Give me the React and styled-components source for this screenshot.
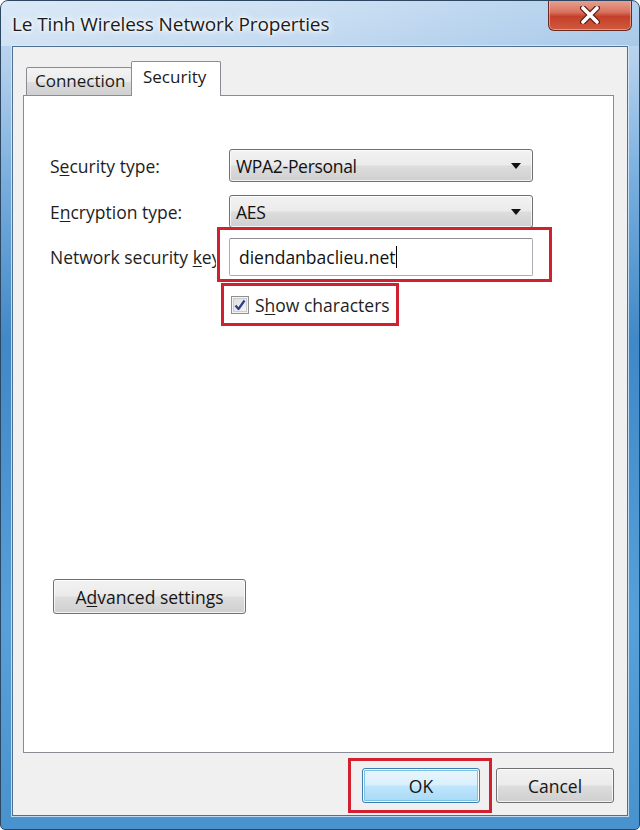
import styled, { createGlobalStyle, css } from "styled-components";

const Global = createGlobalStyle`
  html, body { margin: 0; padding: 0; background: #fff; }
  body { font-family: "Open Sans", "Noto Sans", sans-serif; }
  * { box-sizing: border-box; }
`;

const win7Face = css`
  border: 1px solid #707070;
  border-radius: 3px;
  background: linear-gradient(to bottom, #f2f2f2 0%, #ebebeb 48%, #dddddd 52%, #cfcfcf 100%);
  box-shadow: inset 0 0 0 1px rgba(255, 255, 255, 0.75);
`;

const Window = styled.div`
  width: 640px;
  height: 830px;
  border: 1px solid #2d4763;
  border-radius: 8px 8px 5px 5px;
  overflow: hidden;
  display: flex;
  flex-direction: column;
  background:
    linear-gradient(to bottom, #c7ddf2 0px, #b4d0ec 60px, #78aede 180px, #4088c6 340px, #58a0d9 620px, #4892cd 830px);
`;

const TitleBar = styled.div`
  height: 45px;
  flex-shrink: 0;
  display: flex;
  align-items: flex-start;
  padding-left: 11px;
  background: linear-gradient(to right, rgba(255, 255, 255, 0.35) 0%, rgba(255, 255, 255, 0.15) 45%, rgba(120, 170, 220, 0.25) 100%);
`;

const Title = styled.div`
  margin-top: 10px;
  font-size: 19px;
  color: #1b1b1b;
  letter-spacing: -0.1px;
  text-shadow: 0 0 10px #fff, 0 0 6px #fff, 0 0 3px #fff;
`;

const CloseButton = styled.div`
  margin-left: auto;
  margin-right: 7px;
  margin-top: -1px;
  width: 84px;
  height: 31px;
  border: 1px solid #6a2a22;
  border-top: none;
  border-radius: 0 0 6px 6px;
  background: linear-gradient(to bottom, #e8a595 0%, #d9725f 40%, #c4402a 55%, #cf5a3e 100%);
  box-shadow: inset 0 0 0 1px rgba(255, 210, 200, 0.5);
  display: flex;
  align-items: center;
  justify-content: center;
`;

const Frame = styled.div`
  flex: 1;
  display: flex;
  padding: 0 11px 13px 11px;
`;

const Client = styled.div`
  flex: 1;
  display: flex;
  flex-direction: column;
  background: #f0f0f0;
  border: 1px solid #4f6f90;
  box-shadow: 0 0 0 1px rgba(220, 236, 250, 0.8);
  padding: 14px 13px 12px 10px;
`;

const TabStrip = styled.div`
  display: flex;
  align-items: flex-end;
  padding-left: 3px;
  height: 35px;
  margin-bottom: -1px;
  position: relative;
  z-index: 1;
`;

const Tab = styled.div`
  height: ${(p) => (p.$active ? 35 : 29)}px;
  width: ${(p) => p.$w}px;
  border: 1px solid #898c95;
  border-bottom: ${(p) => (p.$active ? "none" : "1px solid #898c95")};
  border-radius: 2px 2px 0 0;
  background: ${(p) =>
    p.$active ? "#fff" : "linear-gradient(to bottom, #f3f3f3 0%, #ebebeb 50%, #dddddd 51%, #cfcfcf 100%)"};
  font-size: 17px;
  color: #1a1a1a;
  padding-left: ${(p) => (p.$active ? 11 : 8)}px;
  padding-top: ${(p) => (p.$active ? 3 : 1)}px;
  margin-left: ${(p) => (p.$active ? -1 : 0)}px;
`;

const Panel = styled.div`
  flex: 1;
  background: #fff;
  border: 1px solid #898c95;
  display: flex;
  flex-direction: column;
  padding: 53px 0 0 26px;
`;

const Row = styled.div`
  display: grid;
  grid-template-columns: 179px 304px;
  align-items: center;
  margin-top: ${(p) => p.$gap || 0}px;
`;

const Label = styled.div`
  font-size: 17.5px;
  color: #1e1e1e;
  white-space: nowrap;
  overflow: hidden;
  width: ${(p) => p.$clip || 179}px;
  u { text-decoration: underline; text-underline-offset: 2px; }
`;

const Combo = styled.div`
  ${win7Face};
  height: 33px;
  display: flex;
  align-items: center;
  padding: 0 11px 0 6px;
  font-size: 17.5px;
  color: #111;
  span { flex: 1; letter-spacing: -0.3px; }
`;

const Highlight = styled.div`
  position: relative;
  &::after {
    content: "";
    position: absolute;
    top: ${(p) => p.$t}px;
    left: ${(p) => p.$l}px;
    right: ${(p) => p.$r}px;
    bottom: ${(p) => p.$b}px;
    border: 3px solid #d1202f;
    pointer-events: none;
  }
`;

const TextBox = styled.div`
  height: 38px;
  border: 1px solid #abadb3;
  border-top-color: #8e9096;
  border-radius: 2px;
  background: #fff;
  display: flex;
  align-items: center;
  padding-left: 9px;
  font-size: 17.5px;
  color: #111;
`;

const Caret = styled.span`
  display: inline-block;
  width: 1px;
  height: 22px;
  background: #000;
  margin-left: 1px;
`;

const CheckRow = styled.div`
  margin-top: 17px;
  margin-left: 181px;
  align-self: flex-start;
  display: flex;
  align-items: center;
  gap: 6px;
  font-size: 17.5px;
  color: #1e1e1e;
  u { text-decoration: underline; text-underline-offset: 2px; }
`;

const CheckBox = styled.div`
  width: 18px;
  height: 18px;
  border: 1px solid #8e8f8f;
  background: linear-gradient(135deg, #dcdcdc 0%, #f7f7f7 100%);
  box-shadow: inset 0 0 0 1px #f4f4f4, inset 0 0 0 2px #c8cdd3;
  display: flex;
  align-items: center;
  justify-content: center;
`;

const Button = styled.div`
  ${win7Face};
  height: 35px;
  width: ${(p) => p.$w}px;
  display: flex;
  align-items: center;
  justify-content: center;
  font-size: 17.5px;
  color: #151515;
  u { text-decoration: underline; text-underline-offset: 2px; }
  ${(p) =>
    p.$default &&
    css`
      border-color: #3c7fb1;
      background: linear-gradient(to bottom, #eaf6fd 0%, #d9f0fc 48%, #bee6fd 52%, #a7d9f5 100%);
      box-shadow: inset 0 0 0 1px #ffffff, inset 0 0 0 2px #7dc2e8;
    `}
`;

const AdvancedWrap = styled.div`
  margin-top: auto;
  margin-bottom: 138px;
  margin-left: 3px;
`;

const Footer = styled.div`
  display: flex;
  justify-content: flex-end;
  gap: 16px;
  margin-top: 15px;
`;

function Arrow() {
  return (
    <svg width="10" height="6" viewBox="0 0 10 6">
      <path d="M0 0 H10 L5 6 Z" fill="#111" />
    </svg>
  );
}

export default function App() {
  return (
    <>
      <Global />
      <Window>
        <TitleBar>
          <Title>Le Tinh Wireless Network Properties</Title>
          <CloseButton>
            <svg width="22" height="18" viewBox="0 0 22 18">
              <path d="M4 2 L18 16 M18 2 L4 16" stroke="#5a1e16" strokeWidth="6" strokeLinecap="round" />
              <path d="M4 2 L18 16 M18 2 L4 16" stroke="#ffffff" strokeWidth="3.6" strokeLinecap="round" />
            </svg>
          </CloseButton>
        </TitleBar>
        <Frame>
          <Client>
            <TabStrip>
              <Tab $w={106}>Connection</Tab>
              <Tab $w={90} $active>
                Security
              </Tab>
            </TabStrip>
            <Panel>
              <Row>
                <Label>
                  S<u>e</u>curity type:
                </Label>
                <Combo>
                  <span>WPA2-Personal</span>
                  <Arrow />
                </Combo>
              </Row>
              <Row $gap={13}>
                <Label>
                  E<u>n</u>cryption type:
                </Label>
                <Combo>
                  <span>AES</span>
                  <Arrow />
                </Combo>
              </Row>
              <Row $gap={10}>
                <Label $clip={166}>
                  Network security <u>k</u>ey:
                </Label>
                <Highlight $t={-11} $l={-12} $r={-19} $b={-6}>
                  <TextBox>
                    diendanbaclieu.net
                    <Caret />
                  </TextBox>
                </Highlight>
              </Row>
              <Highlight as={CheckRow} $t={-10} $l={-10} $r={-9} $b={-9}>
                <CheckBox>
                  <svg width="12" height="12" viewBox="0 0 12 12">
                    <path
                      d="M1.5 6.5 L4.5 10 L10.5 1.5"
                      fill="none"
                      stroke="#2a3f8f"
                      strokeWidth="2.2"
                      strokeLinejoin="round"
                    />
                  </svg>
                </CheckBox>
                <span>
                  S<u>h</u>ow characters
                </span>
              </Highlight>
              <AdvancedWrap>
                <Button $w={193}>
                  A<u>d</u>vanced settings
                </Button>
              </AdvancedWrap>
            </Panel>
            <Footer>
              <Highlight $t={-10} $l={-14} $r={-12} $b={-10}>
                <Button $w={118} $default>
                  OK
                </Button>
              </Highlight>
              <Button $w={118}>Cancel</Button>
            </Footer>
          </Client>
        </Frame>
      </Window>
    </>
  );
}
